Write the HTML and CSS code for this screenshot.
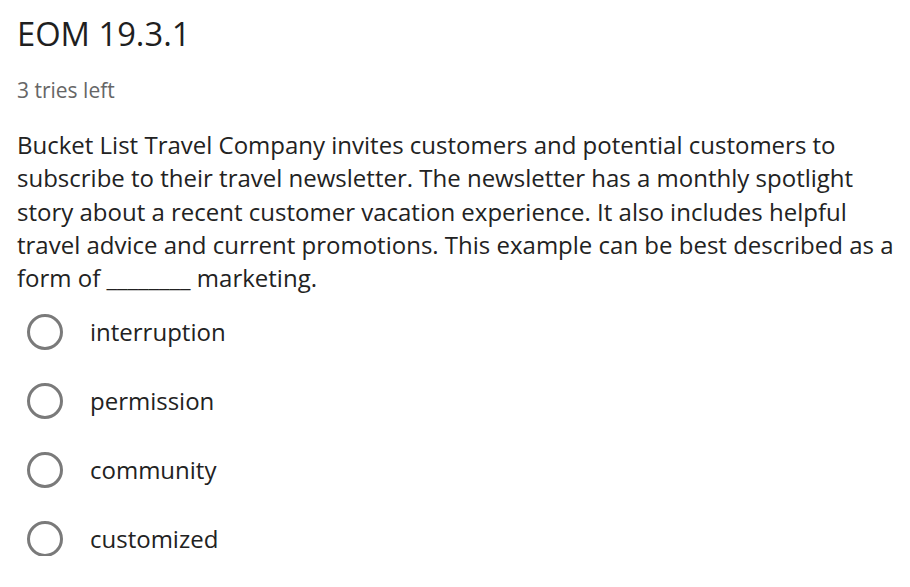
FILE: index.html
```html
<!DOCTYPE html>
<html lang="en">
<head>
<meta charset="utf-8">
<title>EOM 19.3.1</title>
<link rel="stylesheet" href="styles.css">
</head>
<body>
<main class="question">
  <h1 class="title">EOM 19.3.1</h1>
  <p class="tries">3 tries left</p>
  <p class="prompt">Bucket List Travel Company invites customers and potential customers to subscribe to their travel newsletter. The newsletter has a monthly spotlight story about a recent customer vacation experience. It also includes helpful travel advice and current promotions. This example can be best described as a form of ________ marketing.</p>
  <ul class="options">
    <li class="option"><span class="radio"></span><span class="label">interruption</span></li>
    <li class="option"><span class="radio"></span><span class="label">permission</span></li>
    <li class="option"><span class="radio"></span><span class="label">community</span></li>
    <li class="option"><span class="radio"></span><span class="label">customized</span></li>
  </ul>
</main>
</body>
</html>
```
FILE: styles.css
```css
html, body {
  margin: 0;
  padding: 0;
  background: #ffffff;
}
body {
  font-family: "Open Sans", "Liberation Sans", sans-serif;
  color: #222222;
}
.question {
  padding: 12px 0 0 17px;
}
.title {
  margin: 0;
  font-size: 32.7px;
  font-weight: 400;
  line-height: 44px;
  color: #1f1f1f;
}
.tries {
  margin: 20px 0 0 0;
  font-size: 21px;
  line-height: 28px;
  color: #666666;
}
.prompt {
  margin: 24px 0 0 0;
  font-size: 24px;
  line-height: 33.3px;
  color: #222222;
}
.options {
  list-style: none;
  margin: 20px 0 0 0;
  padding: 0;
  display: flex;
  flex-direction: column;
  gap: 34px;
}
.option {
  display: flex;
  align-items: center;
  height: 35px;
}
.radio {
  box-sizing: border-box;
  width: 36px;
  height: 36px;
  margin-left: 10px;
  border: 3px solid #7a7a7a;
  border-radius: 50%;
  flex: none;
}
.label {
  margin-left: 27px;
  font-size: 24px;
  color: #222222;
}
```
